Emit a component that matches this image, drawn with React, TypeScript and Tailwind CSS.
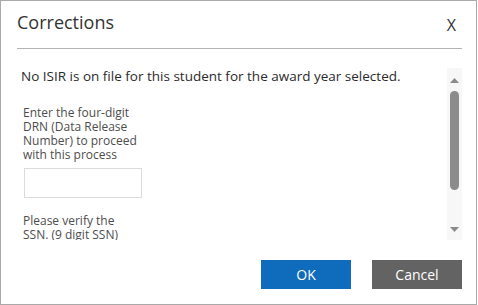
import React from "react";

export default function App() {
  return (
    <div
      className="w-[478px] h-[305px] bg-white"
      style={{ fontFamily: '"Open Sans", "Liberation Sans", sans-serif' }}
    >
      <div className="w-[477px] h-[305px] border border-[#a9a9a9] flex flex-col bg-white">
        {/* Header */}
        <div className="h-[48px] ml-[16px] mr-[14px] border-b border-[#b3b3b3] flex justify-between items-start shrink-0">
          <div className="pt-[9px] text-[18px] leading-[24px] text-[#333333]">Corrections</div>
          <div className="pt-[14px] pr-[6px] text-[16px] leading-[20px] text-[#333333]">X</div>
        </div>

        {/* Body */}
        <div className="h-[191px] flex shrink-0">
          <div className="flex-1 overflow-hidden pl-[20px] pt-[17px] flex flex-col items-start">
            <div className="text-[13.5px] leading-[20px] text-[#2b2b2b] whitespace-nowrap">
              No ISIR is on file for this student for the award year selected.
            </div>
            <div className="mt-[20px] pl-[2px] w-[118px] text-[12px] leading-[14px] text-[#4d4d4d]">
              Enter the four-digit DRN (Data Release Number) to proceed with this process
            </div>
            <div className="mt-[6px] ml-[3px] w-[118px] h-[30px] border border-[#dcdcdc] bg-white shrink-0" />
            <div className="mt-[16px] pl-[2px] w-[118px] text-[12px] leading-[14px] text-[#4d4d4d]">
              Please verify the SSN. (9 digit SSN)
            </div>
          </div>
          <div className="mt-[19px] mr-[14px] w-[15px] h-[172px] bg-[#f7f7f7] flex flex-col items-center shrink-0">
            <svg width="9" height="5" viewBox="0 0 9 5" className="mt-[10px]">
              <polygon points="4.5,0 9,5 0,5" fill="#8a8a8a" />
            </svg>
            <div className="mt-[8px] w-[9px] h-[99px] rounded-full bg-[#8c8c8c]" />
            <div className="flex-1" />
            <svg width="9" height="5" viewBox="0 0 9 5" className="mb-[8px]">
              <polygon points="0,0 9,0 4.5,5" fill="#8a8a8a" />
            </svg>
          </div>
        </div>

        {/* Footer */}
        <div className="flex justify-end gap-[21px] pr-[14px] pt-[20px]">
          <button className="w-[90px] h-[29px] bg-[#0f6cbd] text-white text-[14px] leading-[20px]">
            OK
          </button>
          <button className="w-[90px] h-[29px] bg-[#636363] text-white text-[14px] leading-[20px]">
            Cancel
          </button>
        </div>
      </div>
    </div>
  );
}
